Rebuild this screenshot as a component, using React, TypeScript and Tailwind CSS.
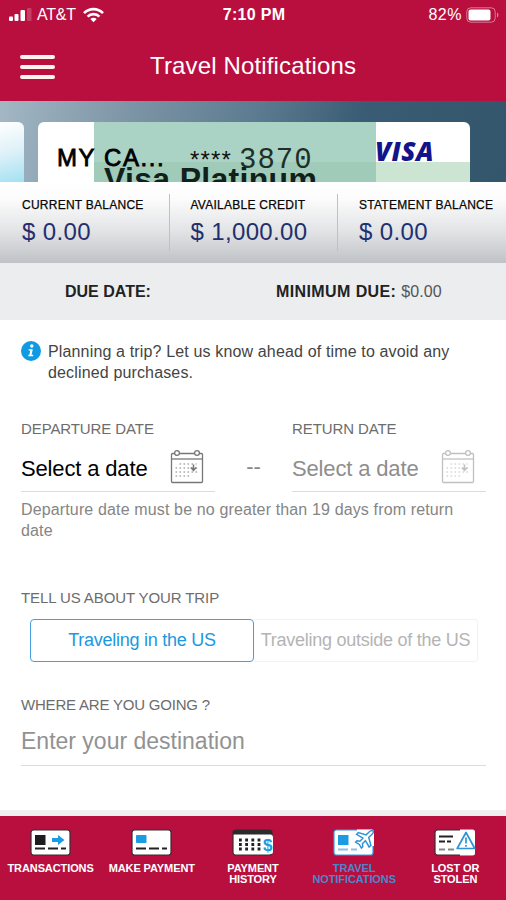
import type { ReactNode } from 'react';

const sans = 'font-["Liberation_Sans",Arial,sans-serif]';

function StatusBar() {
  return (
    <div className="flex h-[30px] items-center justify-between pl-[9px] pr-[7px] text-white">
      <div className="flex w-[150px] items-center">
        <svg width="24" height="14" viewBox="0 0 24 14" fill="#fff">
          <rect x="0" y="8.5" width="4" height="4.5" rx="1" />
          <rect x="5.5" y="6" width="4" height="7" rx="1" />
          <rect x="11.5" y="2" width="4.5" height="11" rx="1" />
          <rect x="18" y="0" width="4.5" height="13" rx="1" opacity="0.2" />
        </svg>
        <span className="ml-1 text-[16px] leading-none tracking-[-0.2px]">AT&amp;T</span>
        <svg className="ml-[7px]" width="21" height="16" viewBox="0 0 21 16" fill="none" stroke="#fff" strokeWidth="2.6">
          <path d="M1 6.2C6.2.7 14.8.7 20 6.2" />
          <path d="M4.6 9.6c3.2-3.3 8.6-3.3 11.8 0" />
          <path d="M10.5 15.2l-3.2-3.3c1.8-1.7 4.6-1.7 6.4 0z" fill="#fff" stroke="none" />
        </svg>
      </div>
      <span className="whitespace-nowrap text-[16px] font-bold leading-none tracking-[0.3px]">7:10 PM</span>
      <div className="flex w-[150px] items-center justify-end gap-1">
        <span className="text-[16px] leading-none tracking-[0.5px]">82%</span>
        <svg width="33" height="16" viewBox="0 0 33 16">
          <rect x="0.8" y="0.8" width="28.4" height="14.4" rx="4" fill="none" stroke="#fff" strokeOpacity="0.45" />
          <rect x="2.5" y="2.5" width="22" height="11" rx="2" fill="#fff" />
          <path d="M31 5.5c1.8.8 1.8 4.2 0 5z" fill="#fff" opacity="0.5" />
        </svg>
      </div>
    </div>
  );
}

function Header() {
  return (
    <div className="flex h-[71px] items-center pl-5 text-white">
      <div className="mt-[2px] flex w-[35px] flex-col gap-[6px]">
        <span className="h-[4px] rounded-sm bg-[#fff3ee]" />
        <span className="h-[4px] rounded-sm bg-[#fff3ee]" />
        <span className="h-[4px] rounded-sm bg-[#fff3ee]" />
      </div>
      <h1 className="ml-[95px] whitespace-nowrap text-[24px] leading-none tracking-[0.15px]">Travel Notifications</h1>
    </div>
  );
}

function CardCarousel() {
  return (
    <div className="flex h-[81px] overflow-hidden bg-[linear-gradient(100deg,#a3b7c4_0%,#7d95a6_25%,#5c7b90_50%,#3a5c74_70%,#34566c_100%)] pt-[21px]">
      <div className="h-[70px] w-6 shrink-0 rounded-tr-md bg-[linear-gradient(165deg,#fff_0%,#dcf0f8_45%,#8fdcf0_100%)]" />
      <div className="relative ml-[14px] h-[70px] w-[432px] shrink-0 overflow-hidden rounded-t-md bg-white">
        <div className="absolute left-14 top-0 h-full w-[282px] bg-[#abd3c5]" />
        <div className="absolute left-14 top-10 h-full w-[282px] bg-[#a0cbb9]" />
        <div className="absolute left-[338px] top-10 h-full w-[94px] bg-[#cce4d2]" />
        <div className="relative flex whitespace-nowrap pl-[19px] pt-6">
          <span className="w-[133px] text-[24px] leading-6 tracking-[1.6px] text-black [-webkit-text-stroke:0.8px_#000]">MY CA...</span>
          <span className="w-[49px] pt-[2px] text-[24px] leading-6 tracking-[1.2px] text-[#111]">****</span>
          <span className='w-[136px] pt-px font-["Liberation_Mono",monospace] text-[29px] leading-7 tracking-[1px] text-[#1c3029]'>3870</span>
          <span className='-mt-[13px] font-["Open_Sans",sans-serif] text-[26px] font-extrabold italic leading-9 tracking-[0.5px] text-[#12148c]'>VISA</span>
        </div>
        <div className="absolute left-[66px] top-[39px] whitespace-nowrap text-[32px] font-bold leading-9 tracking-[0.3px] text-[#10201b]">Visa Platinum</div>
      </div>
    </div>
  );
}

function Balance({ label, value, divider }: { label: string; value: string; divider?: boolean }) {
  return (
    <div className={`h-[57px] w-[168.5px] shrink-0 whitespace-nowrap ${divider ? 'border-l border-[#bfc1c5] pl-[21px]' : 'pl-[22px]'}`}>
      <div className="pt-[3px] text-[12px] leading-4 tracking-[0.25px] text-black [-webkit-text-stroke:0.25px_#111]">{label}</div>
      <div className="mt-[6px] text-[24px] leading-[26px] tracking-[0.35px] text-[#1f2f70]">{value}</div>
    </div>
  );
}

function Summary() {
  return (
    <>
      <div className="flex h-[81px] overflow-hidden bg-[linear-gradient(180deg,#fff_0%,#fcfcfc_20%,#e3e4e6_60%,#bfc2c6_100%)] pt-[12px]">
        <Balance label="CURRENT BALANCE" value="$ 0.00" />
        <Balance label="AVAILABLE CREDIT" value="$ 1,000.00" divider />
        <Balance label="STATEMENT BALANCE" value="$ 0.00" divider />
      </div>
      <div className="flex h-[57px] items-center bg-[#ecedef] text-[16px] leading-none text-[#222]">
        <span className="w-[212px] pl-[65px] font-bold">DUE DATE:</span>
        <span className="whitespace-nowrap pl-[64px] tracking-[0.4px]">
          <b>MINIMUM DUE:</b> <span className="tracking-[0.1px] text-[#555]">$0.00</span>
        </span>
      </div>
    </>
  );
}

function CalendarIcon() {
  return (
    <svg width="34" height="35" viewBox="0 0 34 35" fill="none" stroke="#777" strokeWidth="1.3">
      <rect x="1.5" y="4.5" width="31" height="29" rx="1" />
      <path d="M1.5 10h31" />
      <circle cx="7" cy="4" r="2.4" fill="#fff" />
      <circle cx="27" cy="4" r="2.4" fill="#fff" />
      <path d="M9.5 15h17M5.5 19h22M5.5 23h22M5.5 27h15" strokeWidth="1.6" strokeDasharray="1.6 2.4" stroke="#aaa" />
      <path d="M23.5 15.5v6M20.8 18.5l2.7 2.8 2.7-2.8" strokeWidth="1.5" />
    </svg>
  );
}

function DateField({ label, muted }: { label: string; muted?: boolean }) {
  return (
    <div className="w-[194px]">
      <div className="pt-px text-[15px] leading-5 tracking-[-0.1px] text-[#6d6d6d]">{label}</div>
      <div className="mt-[10px] flex h-[43px] items-start justify-between border-b border-[#dcdcdc] pr-[11px]">
        <span className={`whitespace-nowrap pt-[6px] text-[22px] leading-7 tracking-[-0.15px] ${muted ? 'text-[#8e8e8e]' : 'text-black'}`}>Select a date</span>
        <span className={muted ? 'opacity-45' : ''}>
          <CalendarIcon />
        </span>
      </div>
    </div>
  );
}

function TripForm() {
  return (
    <div className="h-[490px] bg-white pl-[21px] pr-[20px] pt-[21px]">
      <div className="flex text-[16px] leading-[21px] tracking-[0.15px] text-[#444]">
        <svg className="mr-[7px] shrink-0" width="20" height="20" viewBox="0 0 20 20">
          <circle cx="10" cy="10" r="10" fill="#109ae4" />
          <circle cx="10.8" cy="5" r="1.7" fill="#fff" />
          <path d="M7.6 8.2h4.2l-1.2 5.6h1.6v1.5H7.4v-1.5h1l.9-4.2H7.6z" fill="#fff" />
        </svg>
        <p className="whitespace-nowrap">
          Planning a trip? Let us know ahead of time to avoid any
          <br />
          declined purchases.
        </p>
      </div>

      <div className="mt-[35px] flex justify-between">
        <DateField label="DEPARTURE DATE" />
        <span className="pt-[37px] text-[22px] leading-6 text-[#888]">--</span>
        <DateField label="RETURN DATE" muted />
      </div>
      <p className="mt-[7px] whitespace-nowrap text-[16px] leading-[21px] tracking-[0.14px] text-[#858585]">
        Departure date must be no greater than 19 days from return
        <br />
        date
      </p>

      <div className="mt-[47px] text-[15px] leading-5 tracking-[-0.1px] text-[#6d6d6d]">TELL US ABOUT YOUR TRIP</div>
      <div className="ml-[9px] mt-[11px] flex h-[43px] w-[448px] whitespace-nowrap text-[18px] tracking-[-0.26px]">
        <div className="flex w-[224px] items-center justify-center rounded border-[1.5px] border-[#459fdf] text-[#1b98e0]">Traveling in the US</div>
        <div className="flex w-[224px] items-center justify-center rounded-r border border-l-0 border-[#f2f2f2] text-[#b4b4b4]">Traveling outside of the US</div>
      </div>

      <div className="mt-[33px] text-[15px] leading-5 tracking-[-0.2px] text-[#6d6d6d]">WHERE ARE YOU GOING ?</div>
      <div className="mt-[10px] h-[41px] border-b border-[#dcdcdc] pt-[2px] text-[23px] leading-7 text-[#929292]">Enter your destination</div>
    </div>
  );
}

function CardIcon({ children, color = '#3a2a30' }: { children: ReactNode; color?: string }) {
  return (
    <svg className="overflow-visible" width="42" height="27" viewBox="0 0 42 27">
      <rect x="1" y="1" width="39" height="25" rx="2.5" fill="#fff" stroke={color} strokeWidth="1.2" />
      {children}
    </svg>
  );
}

const tabs = [
  {
    label: ['TRANSACTIONS'],
    icon: (
      <CardIcon>
        <rect x="5" y="6" width="10.5" height="10" fill="#1d1d1f" />
        <path d="M22 9h6V6l6.5 5-6.5 5v-3h-6z" fill="#1b9be2" />
        <path d="M5 19.5h10M18 19.5h10M31 19.5h5" stroke="#222" strokeWidth="2" />
      </CardIcon>
    ),
  },
  {
    label: ['MAKE PAYMENT'],
    icon: (
      <CardIcon>
        <rect x="5" y="6" width="10.5" height="8" rx="1" fill="#1b9be2" />
        <path d="M5 19.5h10M18 19.5h10M31 19.5h5" stroke="#222" strokeWidth="2" />
      </CardIcon>
    ),
  },
  {
    label: ['PAYMENT', 'HISTORY'],
    icon: (
      <CardIcon>
        <rect x="30" y="6" width="11" height="19" rx="2" fill="#fff" />
        <path d="M1 5.5V3q0-2 2-2h35q2 0 2 2v2.5z" fill="#2b2b2e" />
        <path d="M7 11h22M7 15.5h22M7 20h22" stroke="#222" strokeWidth="2.8" strokeDasharray="2.8 3.4" />
        <text x="31" y="21.5" fontSize="17" fontWeight="bold" fill="#1b9be2">$</text>
      </CardIcon>
    ),
  },
  {
    label: ['TRAVEL', 'NOTIFICATIONS'],
    active: true,
    icon: (
      <CardIcon color="#3f9be0">
        <rect x="5" y="6" width="10.5" height="10" fill="#1b9be2" />
        <path d="M5 20.5h10M18 20.5h6" stroke="#8fbfe6" strokeWidth="2" />
        <path d="M24 .5h15q2 0 2 2V17h-4V3H24z" fill="#fff" />
        <path
          transform="translate(-3.5 -.5) scale(1.12)"
          d="M39 2.2c-1.500-1-3.200.3-4.600 1.800l-1.700 1.700-7-2-1.500 1.600 5.600 3.300-2.600 2.800-2.700-.4-1.200 1.200 3.300 2 1.900 3.200 1.200-1.200-.3-2.600 2.700-2.700 3.300 5.600 1.600-1.500-2-7 1.800-1.700c1.400-1.400 3.200-2.800 2.200-4.100z"
          fill="#fff"
          stroke="#2f93d8"
          strokeWidth="1.3"
        />
      </CardIcon>
    ),
  },
  {
    label: ['LOST OR', 'STOLEN'],
    icon: (
      <CardIcon>
        <path d="M5 7.5h14M5 12.5h6M13 12.5h4" stroke="#222" strokeWidth="2.2" />
        <path d="M5 20.5h6M14 20.5h6" stroke="#888" strokeWidth="2" />
        <path d="M26 .5h12.500q2.500 0 2.500 2.500v21q0 2.500-2.500 2.500H26z" fill="#fff" />
        <path d="M32 3.500l8.800 16H23.200z" fill="#fff" stroke="#2f93d8" strokeWidth="1.7" strokeLinejoin="round" />
        <path d="M32 8.500v6M32 16v1.800" stroke="#2f93d8" strokeWidth="1.7" />
      </CardIcon>
    ),
  },
];

function TabBar() {
  return (
    <div className="flex h-[84px] bg-[#b90f3f] pt-[13px]">
      {tabs.map((tab) => (
        <div key={tab.label[0]} className="flex w-1/5 flex-col items-center">
          {tab.icon}
          <div className={`mt-[7px] whitespace-nowrap text-center text-[11px] font-bold leading-[11px] tracking-[-0.1px] ${tab.active ? 'text-[#4a86cc]' : 'text-white'}`}>
            {tab.label.map((line) => (
              <div key={line}>{line}</div>
            ))}
          </div>
        </div>
      ))}
    </div>
  );
}

export default function App() {
  return (
    <div className={`flex h-[900px] w-[506px] flex-col overflow-hidden bg-white ${sans}`}>
      <div className="h-[101px] shrink-0 bg-[#b90f3f]">
        <StatusBar />
        <Header />
      </div>
      <CardCarousel />
      <Summary />
      <TripForm />
      <div className="h-[6px] bg-[#f0f0f0]" />
      <TabBar />
    </div>
  );
}
